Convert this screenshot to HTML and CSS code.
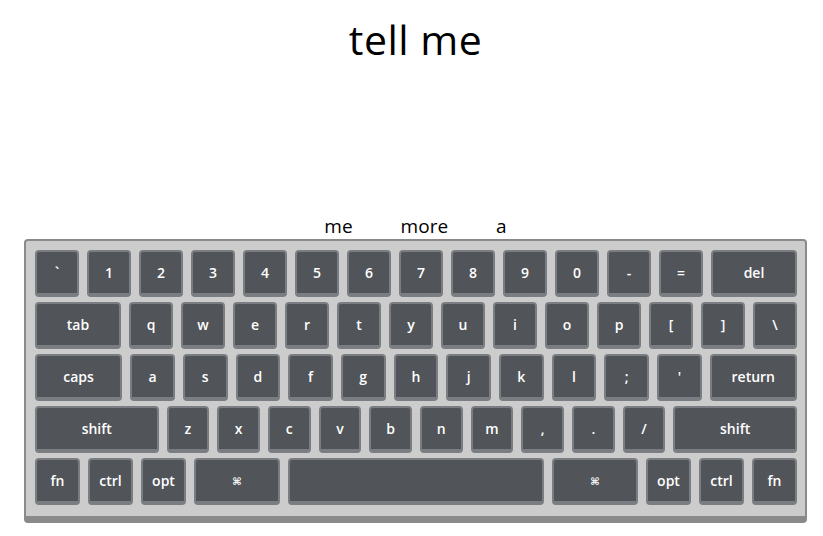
FILE: index.html
```html
<!DOCTYPE html>
<html>
<head>
<meta charset="utf-8">
<link rel="stylesheet" href="styles.css">
</head>
<body>
<div class="page">
  <h1 class="title">tell me</h1>
  <div class="suggestions">
    <span class="word">me</span>
    <span class="word">more</span>
    <span class="word">a</span>
  </div>
  <div class="keyboard">
    <div class="row">
      <div class="key k44">`</div>
      <div class="key k44">1</div>
      <div class="key k44">2</div>
      <div class="key k44">3</div>
      <div class="key k44">4</div>
      <div class="key k44">5</div>
      <div class="key k44">6</div>
      <div class="key k44">7</div>
      <div class="key k44">8</div>
      <div class="key k44">9</div>
      <div class="key k44">0</div>
      <div class="key k44">-</div>
      <div class="key k44">=</div>
      <div class="key k86">del</div>
    </div>
    <div class="row">
      <div class="key k86">tab</div>
      <div class="key k44">q</div>
      <div class="key k44">w</div>
      <div class="key k44">e</div>
      <div class="key k44">r</div>
      <div class="key k44">t</div>
      <div class="key k44">y</div>
      <div class="key k44">u</div>
      <div class="key k44">i</div>
      <div class="key k44">o</div>
      <div class="key k44">p</div>
      <div class="key k44">[</div>
      <div class="key k44">]</div>
      <div class="key k44">\</div>
    </div>
    <div class="row">
      <div class="key k87">caps</div>
      <div class="key k447">a</div>
      <div class="key k447">s</div>
      <div class="key k447">d</div>
      <div class="key k447">f</div>
      <div class="key k447">g</div>
      <div class="key k447">h</div>
      <div class="key k447">j</div>
      <div class="key k447">k</div>
      <div class="key k447">l</div>
      <div class="key k447">;</div>
      <div class="key k447">'</div>
      <div class="key k87">return</div>
    </div>
    <div class="row">
      <div class="key k123">shift</div>
      <div class="key k427">z</div>
      <div class="key k427">x</div>
      <div class="key k427">c</div>
      <div class="key k427">v</div>
      <div class="key k427">b</div>
      <div class="key k427">n</div>
      <div class="key k427">m</div>
      <div class="key k427">,</div>
      <div class="key k427">.</div>
      <div class="key k427">/</div>
      <div class="key k123">shift</div>
    </div>
    <div class="row">
      <div class="key k45">fn</div>
      <div class="key k45">ctrl</div>
      <div class="key k45">opt</div>
      <div class="key k86 cmd">⌘</div>
      <div class="key space"></div>
      <div class="key k86 cmd">⌘</div>
      <div class="key k45">opt</div>
      <div class="key k45">ctrl</div>
      <div class="key k45">fn</div>
    </div>
  </div>
</div>
</body>
</html>
```

FILE: styles.css
```css
* { box-sizing: border-box; }
html, body {
  margin: 0;
  padding: 0;
  background: #ffffff;
}
body {
  font-family: "Open Sans", "Noto Sans", "DejaVu Sans", sans-serif;
  color: #000;
}
.page {
  width: 783px;
  margin-left: 24px;
  display: flex;
  flex-direction: column;
}
.title {
  margin: 14px 0 0;
  height: 50px;
  line-height: 50px;
  font-size: 41px;
  font-weight: 400;
  letter-spacing: 0.5px;
  text-align: center;
}
.suggestions {
  margin-top: 150px;
  height: 25px;
  line-height: 25px;
  font-size: 19px;
  font-weight: 400;
  display: flex;
  justify-content: center;
  gap: 48px;
}
.keyboard {
  background: #cccccc;
  border: 2px solid #8a8a8a;
  border-bottom-width: 7px;
  border-radius: 4px;
  padding: 9px 8px 11px 9px;
  display: flex;
  flex-direction: column;
  gap: 5px;
}
.row {
  display: flex;
  gap: 8px;
}
.key {
  height: 47px;
  background: #515459;
  border: 2px solid #7a7d81;
  border-bottom-width: 4px;
  border-radius: 4px;
  color: #ffffff;
  font-size: 14px;
  font-weight: 600;
  display: flex;
  align-items: center;
  justify-content: center;
  flex-grow: 0;
  flex-shrink: 0;
}
.k44 { flex-basis: 44px; }
.k45 { flex-basis: 45px; }
.k86 { flex-basis: 86px; }
.k87 { flex-basis: 87.15px; }
.k447 { flex-basis: 44.7px; }
.k427 { flex-basis: 42.7px; }
.k123 { flex-basis: 123.5px; }
.space { flex-basis: 256px; }
.cmd { font-size: 10px; }
```
